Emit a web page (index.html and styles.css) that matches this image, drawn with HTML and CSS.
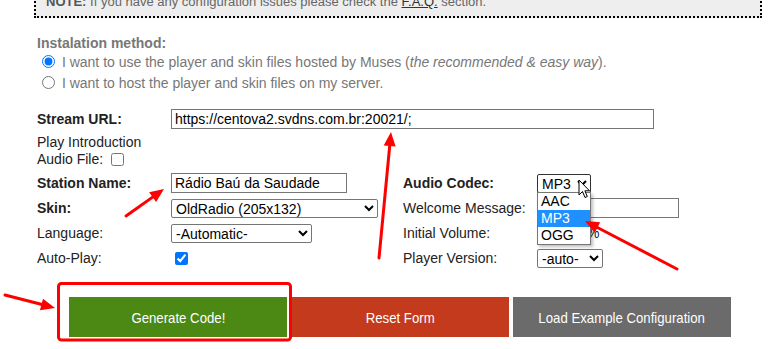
FILE: index.html
```html
<!DOCTYPE html>
<html lang="en">
<head>
  <meta charset="UTF-8">
  <title>Muses Radio Player - Configuration</title>
  <link rel="stylesheet" href="styles.css">
</head>
<body>
  <div class="page">
    <div class="note">
      <b>NOTE:</b> If you have any configuration issues please check the <a href="#">F.A.Q.</a> section.
    </div>

    <div class="install">
      <div class="install-title">Instalation method:</div>
      <label class="opt"><input type="radio" name="method" checked> I want to use the player and skin files hosted by Muses (<i>the recommended &amp; easy way</i>).</label>
      <label class="opt"><input type="radio" name="method"> I want to host the player and skin files on my server.</label>
    </div>

    <div class="form-grid">
      <div class="lbl strong">Stream URL:</div>
      <div class="field wide"><input type="text" class="url" value="https://centova2.svdns.com.br:20021/;"></div>

      <div class="lbl intro">Play Introduction Audio File: <input type="checkbox" class="chk"></div>
      <div class="field"></div>
      <div class="lbl"></div>
      <div class="field"></div>

      <div class="lbl strong">Station Name:</div>
      <div class="field"><input type="text" class="station" value="Rádio Baú da Saudade"></div>
      <div class="lbl strong">Audio Codec:</div>
      <div class="field">
        <span class="codec-wrap">
          <select class="codec"><option>MP3</option></select>
          <ul class="dropdown">
            <li>AAC</li>
            <li class="active">MP3</li>
            <li>OGG</li>
          </ul>
          <svg class="cursor" width="13" height="20" viewBox="0 0 13 20">
            <path d="M1 1 L1 16 L4.5 12.5 L7 18.5 L9.3 17.5 L6.9 11.8 L11.5 11.8 Z" fill="#fff" stroke="#000" stroke-width="1"/>
          </svg>
        </span>
      </div>

      <div class="lbl strong">Skin:</div>
      <div class="field">
        <select class="skin"><option>OldRadio (205x132)</option></select>
      </div>
      <div class="lbl">Welcome Message:</div>
      <div class="field"><input type="text" class="welcome"></div>

      <div class="lbl">Language:</div>
      <div class="field">
        <select class="lang"><option>-Automatic-</option></select>
      </div>
      <div class="lbl">Initial Volume:</div>
      <div class="field"><input type="text" class="volume" value="80"> %</div>

      <div class="lbl">Auto-Play:</div>
      <div class="field"><input type="checkbox" class="chk autoplay" checked></div>
      <div class="lbl">Player Version:</div>
      <div class="field">
        <select class="version"><option>-auto-</option></select>
      </div>
    </div>

    <div class="actions">
      <button class="btn btn-green"><span>Generate Code!</span></button>
      <button class="btn btn-red"><span>Reset Form</span></button>
      <button class="btn btn-gray"><span>Load Example Configuration</span></button>
    </div>
  </div>

  <!-- annotations drawn over the screenshot -->
  <svg class="marks" width="777" height="349" viewBox="0 0 777 349">
    <g stroke="#f00" stroke-width="3" fill="none" stroke-linecap="round">
      <rect x="58.5" y="283.5" width="232" height="56.5" rx="3"/>
      <line x1="5" y1="295" x2="42" y2="304.5"/>
      <line x1="126" y1="216" x2="152.6" y2="197.1"/>
      <line x1="379" y1="258" x2="389.7" y2="146"/>
      <line x1="677" y1="269" x2="597.4" y2="227.5"/>
    </g>
    <g fill="#f00">
      <polygon points="55,308 39.9,310.3 43,298.7"/>
      <polygon points="164,189 156.1,202 149.1,192.2"/>
      <polygon points="391,132 395.6,146.5 383.7,145.4"/>
      <polygon points="585,221 600.2,222.2 594.6,232.8"/>
    </g>
  </svg>
</body>
</html>
```

FILE: styles.css
```css
html, body {
  overflow: hidden;
}
body {
  margin: 0;
  min-height: 349px;
  position: relative;
  font-family: "Liberation Sans", Arial, sans-serif;
  background-color: #fff;
}
.page {
  padding: 0 15px 0 34px;
}
.note {
  margin-top: -10px;
  width: 728px;
  box-sizing: border-box;
  padding: 2px 10px 6px 10px;
  background-color: #eee;
  border: 2px dotted #000;
  font-size: 13px;
  line-height: 16px;
  color: #666;
}
.note b {
  color: #555;
}
.note a {
  color: #333;
}
.install {
  margin: 17px 0 0 3px;
  font-size: 14px;
  color: #777;
}
.install-title {
  font-weight: bold;
  line-height: 16px;
}
.opt {
  display: flex;
  align-items: center;
  height: 21px;
  white-space: pre;
}
.opt input {
  margin: 0 3px 0 5px;
}
.form-grid {
  display: grid;
  grid-template-columns: 134px 232px 134px 240px;
  grid-template-rows: 20px 34px 20px 20px 20px 20px;
  row-gap: 5px;
  margin: 16px 0 0 3px;
  font-size: 14px;
  color: #222;
}
.lbl, .field {
  display: flex;
  align-items: center;
}
.strong {
  font-weight: bold;
}
.intro {
  display: block;
  line-height: 17px;
}
.chk {
  width: 13px;
  height: 13px;
  margin: 0 0 0 4px;
  vertical-align: -2px;
}
.wide {
  grid-column: 2 / 5;
}
input[type="text"] {
  box-sizing: border-box;
  height: 20px;
  padding: 0 3px;
  border: 1px solid #767676;
  border-radius: 0;
  font-family: "Liberation Sans", Arial, sans-serif;
  font-size: 14px;
  color: #000;
}
select {
  box-sizing: border-box;
  height: 19px;
  padding: 0;
  border: 1px solid #767676;
  border-radius: 2px;
  background-color: #fff;
  font-family: "Liberation Sans", Arial, sans-serif;
  font-size: 14px;
  color: #000;
}
.url { width: 483px; }
.station { width: 176px; }
.skin { width: 207px; }
.lang { width: 141px; }
.welcome { width: 142px; }
.volume { width: 46px; margin-right: 4px; }
.version { width: 66px; }
.codec { width: 54px; border-color: #333; }
.autoplay { margin-left: 4px; }

.codec-wrap {
  position: relative;
  display: inline-block;
  height: 19px;
}
.dropdown {
  position: absolute;
  top: 18px;
  left: 0;
  width: 54px;
  box-sizing: border-box;
  margin: 0;
  padding: 0;
  list-style: none;
  background-color: #fff;
  border: 1px solid #767676;
  box-shadow: 2px 2px 3px rgba(0,0,0,0.25);
  z-index: 2;
}
.dropdown li {
  height: 17px;
  line-height: 17px;
  padding-left: 3px;
  font-size: 14px;
  color: #000;
}
.dropdown li.active {
  background-color: #1e90ff;
  color: #fff;
}
.cursor {
  position: absolute;
  top: 5px;
  left: 41px;
  z-index: 3;
}

.actions {
  display: flex;
  gap: 4px;
  margin: 29px 0 0 35px;
}
.btn {
  width: 218px;
  height: 40px;
  border: none;
  color: #fff;
  font-family: "Liberation Sans", Arial, sans-serif;
  font-size: 15px;
}
.btn span {
  display: inline-block;
  transform: scaleX(0.88);
}
.btn-green { background-color: #4b8914; }
.btn-red { background-color: #c33b1c; }
.btn-gray { background-color: #6b6b6b; }

.marks {
  position: absolute;
  top: 0;
  left: 0;
  pointer-events: none;
  z-index: 5;
}
```
